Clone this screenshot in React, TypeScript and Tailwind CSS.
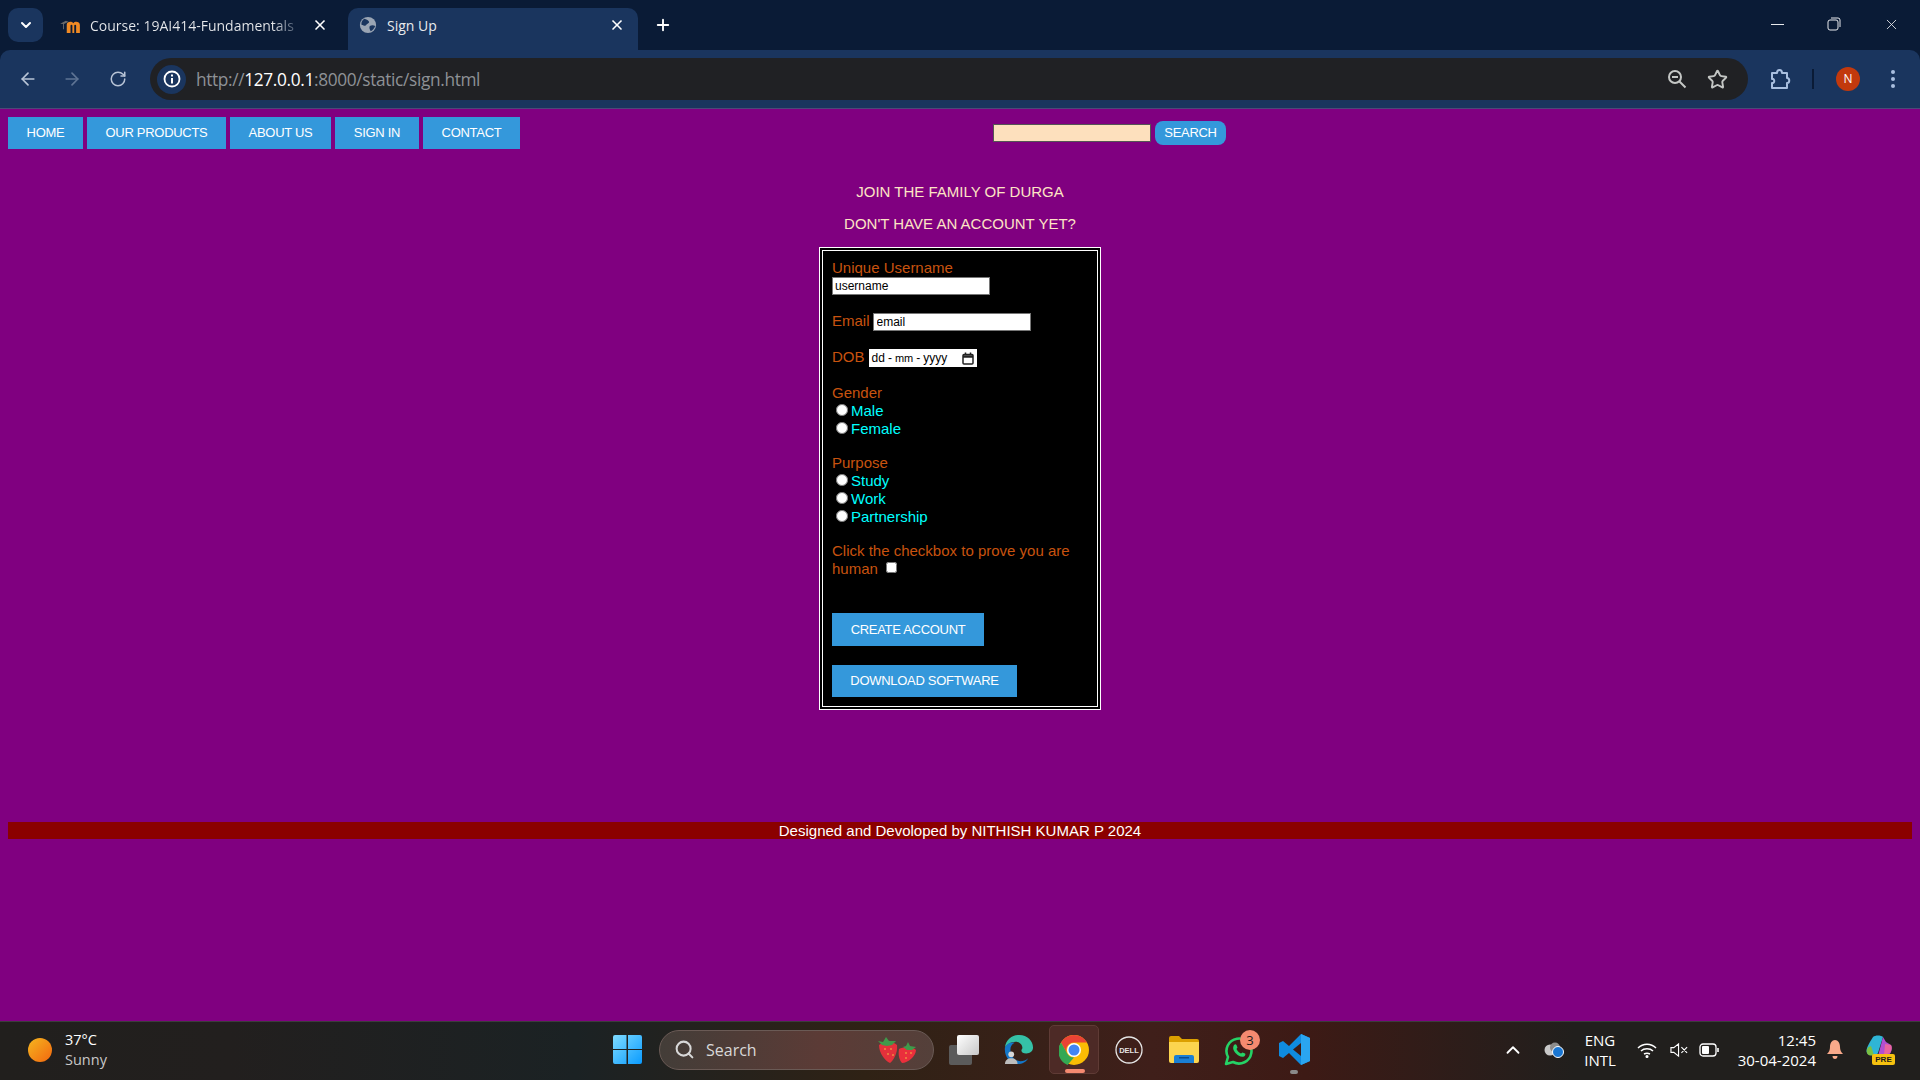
import { ArrowLeft, ArrowRight, ChevronDown, ChevronUp, Plus, RotateCw, Search, Star, X } from 'lucide-react'

const navItems = [
  { label: 'HOME', width: 'w-[75px]' },
  { label: 'OUR PRODUCTS', width: 'w-[139px]' },
  { label: 'ABOUT US', width: 'w-[101px]' },
  { label: 'SIGN IN', width: 'w-[84px]' },
  { label: 'CONTACT', width: 'w-[97px]' },
]

function Globe() {
  return (
    <svg viewBox="0 0 20 20" className="w-[18px] h-[18px] shrink-0">
      <circle cx="10" cy="10" r="9" fill="#9aa5b4" />
      <path d="M6 3c2 1 4 1 5 3s-2 2-3 4-3 0-5 0c-1-3 1-6 3-7zM12 11c2-1 4-1 6 0-1 3-3 5-5 6-1-2-2-4-1-6z" fill="#1a355e" />
    </svg>
  )
}

function MoodleIcon() {
  return (
    <svg viewBox="0 0 22 16" className="w-[21px] h-[15px] shrink-0">
      <path d="M7 16V7c0-3 5-4 7-1.500C16 3 21 4 21 7.500V16h-4V8c0-1-2-1-2 0v8h-2V8c0-1-2-1-2 0v8z" fill="#f08a24" />
      <path d="M0 6l6-3 3 1-5 2.500V12H3V6.500z" fill="#6b6b6b" />
    </svg>
  )
}

function WindowControls() {
  return (
    <div className="ml-auto flex items-center text-[#e8eaed]">
      <div className="w-[13px] h-px bg-[#e8eaed]" />
      <svg viewBox="0 0 14 14" className="w-[14px] h-[14px] ml-[43px]" fill="none" stroke="#e8eaed" strokeWidth="1">
        <rect x="1" y="3" width="10" height="10" rx="2" />
        <path d="M4 1h7a2 2 0 0 1 2 2v7" />
      </svg>
      <X className="w-[17px] h-[17px] ml-[42px] -mr-px" strokeWidth={1.2} />
    </div>
  )
}

function TabStrip() {
  return (
    <div className="h-[50px] bg-[#0a1b36] flex items-end pl-2 pr-[21px] font-['Open_Sans',sans-serif] text-[14px] text-[#e8eaed]">
      <div className="w-[35px] h-[34px] mb-2 rounded-[10px] bg-[#1a355e] flex items-center justify-center">
        <ChevronDown className="w-4 h-4 text-white" strokeWidth={3} />
      </div>
      <div className="w-[305px] h-[42px] pb-2 flex items-center pl-[17px]">
        <MoodleIcon />
        <span className="ml-[9px] w-[207px] whitespace-nowrap overflow-hidden bg-[linear-gradient(90deg,#e8eaed_88%,#3a4a63_100%)] bg-clip-text text-transparent">Course: 19AI414-Fundamentals</span>
        <X className="w-4 h-4 ml-[15px] text-white" strokeWidth={2.5} />
      </div>
      <div className="relative w-[290px] h-[42px] pb-2 rounded-t-[10px] bg-[#1a355e] flex items-center pl-[11px]">
        <Globe />
        <span className="ml-[10px]">Sign Up</span>
        <X className="w-4 h-4 ml-auto mr-[13px] text-white" strokeWidth={2.5} />
      </div>
      <Plus className="w-[18px] h-[18px] ml-4 mb-[16px] text-white" strokeWidth={2.5} />
      <div className="flex-1 flex h-[48px] mb-[2px] items-center">
        <WindowControls />
      </div>
    </div>
  )
}

function Toolbar() {
  return (
    <div className="h-[59px] bg-[#1a355e] border-b border-[#4b4a78] rounded-tl-[10px] rounded-tr-[10px] flex items-center pl-[18px]">
      <ArrowLeft className="w-5 h-5 text-[#b8c4d6]" strokeWidth={2} />
      <ArrowRight className="w-5 h-5 ml-6 text-[#5f7494]" strokeWidth={2} />
      <RotateCw className="w-[18px] h-[18px] ml-[27px] text-[#b8c4d6]" strokeWidth={2} />
      <div className="ml-[23px] w-[1598px] h-[42px] rounded-full bg-[#202124] flex items-center pl-[7px]">
        <div className="w-[29px] h-[29px] rounded-full bg-[#1a355e] flex items-center justify-center">
          <svg viewBox="0 0 18 18" className="w-[18px] h-[18px]">
            <circle cx="9" cy="9" r="7.500" fill="none" stroke="#fff" strokeWidth="1.800" />
            <rect x="8" y="8" width="2" height="5.500" fill="#fff" />
            <rect x="8" y="4.500" width="2" height="2" fill="#fff" />
          </svg>
        </div>
        <span className="ml-[10px] mt-px text-[17.3px] font-['Open_Sans',sans-serif] tracking-[-0.35px] text-[#8e9196]">
          http://<span className="text-white">127.0.0.1</span>:8000/static/sign.html
        </span>
        <svg viewBox="0 0 20 20" className="ml-auto w-[20px] h-[20px]" fill="none" stroke="#c4c7c5" strokeWidth="2">
          <circle cx="8" cy="8" r="6" />
          <path d="M5 8h6M12.500 12.500l6 6" />
        </svg>
        <Star className="ml-[20px] mr-[20px] w-[21px] h-[21px] text-[#c4c7c5]" strokeWidth={2.2} />
      </div>
      <svg viewBox="0 0 22 22" className="ml-[22px] w-[22px] h-[22px]" fill="none" stroke="#a9bfdf" strokeWidth="2" strokeLinejoin="round">
        <path d="M2 5h5c0-4 5-4 5 0h5v5c3 0 3 5 0 5v5H2v-5c3 1 3-5 0-4z" />
      </svg>
      <div className="ml-[20px] w-[2px] h-[20px] bg-[#0a1b36]" />
      <div className="ml-[22px] w-[24px] h-[24px] rounded-full bg-[#c2390d] flex items-center justify-center text-white text-[12px] font-['Open_Sans',sans-serif]">N</div>
      <div className="ml-[31px] flex flex-col gap-[3px]">
        <div className="w-1 h-1 rounded-full bg-[#a9bfdf]" />
        <div className="w-1 h-1 rounded-full bg-[#a9bfdf]" />
        <div className="w-1 h-1 rounded-full bg-[#a9bfdf]" />
      </div>
    </div>
  )
}

function Radio({ name, label, group }: { name: string; label: string; group: string }) {
  return (
    <div className="h-[18px] flex items-center">
      <input type="radio" name={group} value={name} className="ml-1 mr-[3px] w-3 h-3 -mt-[2px]" />
      <span className="text-[#00ffff]">{label}</span>
    </div>
  )
}

function SignForm() {
  return (
    <div className="w-[282px] h-[463px] mx-auto mt-[14px] border-4 border-double border-white bg-black pl-[9px] pt-2 text-[15px] leading-[18px] text-[#c8530f]">
      <div>Unique Username</div>
      <input readOnly defaultValue="username" className="block w-[158px] h-[18px] border border-[#767676] bg-white text-black text-[12px] px-[2px]" />
      <div className="mt-[17px] flex items-start">
        <span>Email</span>
        <input readOnly defaultValue="email" className="ml-[3px] mt-px w-[158px] h-[18px] border border-[#767676] bg-white text-black text-[12px] px-[3px]" />
      </div>
      <div className="mt-[17px] flex items-start">
        <span>DOB</span>
        <div className="ml-1 mt-px w-[108px] h-[18px] bg-white text-black text-[12px] leading-[18px] pl-[3px] flex items-center">
          <span>dd</span>
          <span className="mx-[3px]">-</span>
          <span className="text-[11px]">mm</span>
          <span className="mx-[3px]">-</span>
          <span>yyyy</span>
          <svg viewBox="0 0 12 13" className="ml-auto mr-[3px] w-[12px] h-[13px]" fill="none" stroke="#222" strokeWidth="1.500">
            <rect x="1" y="2.500" width="10" height="9.500" rx="1" />
            <path d="M1 4.500h10" strokeWidth="2.500" />
            <path d="M3.500 0.500v2M8.500 0.500v2" />
          </svg>
        </div>
      </div>
      <div className="mt-[17px]">Gender</div>
      <Radio group="gender" name="male" label="Male" />
      <Radio group="gender" name="female" label="Female" />
      <div className="mt-4">Purpose</div>
      <Radio group="purpose" name="study" label="Study" />
      <Radio group="purpose" name="work" label="Work" />
      <Radio group="purpose" name="partnership" label="Partnership" />
      <div className="mt-4">
        Click the checkbox to prove you are<br />
        human <input type="checkbox" className="ml-[4px] w-[11px] h-[11px] align-[1px]" />
      </div>
      <button className="block mt-[35px] w-[152px] h-[33px] bg-[#3498db] text-white text-[13px] tracking-[-0.3px]">CREATE ACCOUNT</button>
      <button className="block mt-[19px] w-[185px] h-[32px] bg-[#3498db] text-white text-[13px] tracking-[-0.3px]">DOWNLOAD SOFTWARE</button>
    </div>
  )
}

function WindowsLogo() {
  return (
    <svg viewBox="0 0 29 29" className="w-[29px] h-[29px]">
      <defs>
        <linearGradient id="win" x1="0" y1="0" x2="1" y2="1">
          <stop offset="0" stopColor="#7fdcff" />
          <stop offset="1" stopColor="#0a9bff" />
        </linearGradient>
      </defs>
      <path d="M0 2a2 2 0 0 1 2-2h11.500v14H0zM15 0h12a2 2 0 0 1 2 2v12H15zM0 15h13.500v14H2a2 2 0 0 1-2-2zM15 15h14v12a2 2 0 0 1-2 2H15z" fill="url(#win)" />
    </svg>
  )
}

function Strawberries() {
  return (
    <svg viewBox="0 0 42 30" className="w-[42px] h-[30px]">
      <path d="M3 10c5-4 14-4 18 0 1 8-4 16-7 18C9 26 3 18 3 10z" fill="#e4313b" />
      <path d="M2 6l5 1 3-5 3 4 7 0-4 4-5 1-5-1z" fill="#3f9a4a" />
      <path d="M23 14c4-2 14-2 17 1 0 6-8 13-14 13-3-3-4-9-3-14z" fill="#ea2f3c" />
      <path d="M27 12l3-1 2-4 2 4 6 1-4 3-5 0z" fill="#3f9a4a" />
      <g fill="#f6c945">
        <circle cx="9" cy="14" r=".8" /><circle cx="15" cy="14" r=".8" /><circle cx="12" cy="19" r=".8" /><circle cx="17" cy="20" r=".8" /><circle cx="30" cy="18" r=".8" /><circle cx="35" cy="18" r=".8" /><circle cx="30" cy="23" r=".8" />
      </g>
    </svg>
  )
}

function TaskView() {
  return (
    <div className="relative w-[30px] h-[30px]">
      <div className="absolute left-0 bottom-0 w-[23px] h-[20px] rounded-[2px] bg-[#5b5b5b]" />
      <div className="absolute right-0 top-0 w-[22px] h-[20px] rounded-[2px] bg-[linear-gradient(135deg,#ffffff,#c8c8c8)]" />
    </div>
  )
}

function EdgeIcon() {
  return (
    <svg viewBox="0 0 32 32" className="w-[31px] h-[31px]">
      <path d="M2 14C3 5 10 1 17 1c8 0 14 6 14 13 0 4-3 6-7 6-3 0-5-1-5-3 0-1 1-1 1-3 0-3-3-6-7-6-5 0-9 3-11 6z" fill="#35c1a7" />
      <path d="M2 14c2-4 6-6 10-5-4 2-5 6-4 10 1 5 5 9 10 9 3 0 6-1 8-3-2 4-6 6-11 6C7 31 1 23 2 14z" fill="#1477c9" />
      <circle cx="8.500" cy="21" r="3" fill="#d8d8d8" />
      <path d="M2 31c0-4 3-6 6.500-6s6.500 2 6.500 6z" fill="#bdbdbd" />
    </svg>
  )
}

function ChromeIcon() {
  return (
    <svg viewBox="0 0 30 30" className="w-[30px] h-[30px]">
      <circle cx="15" cy="15" r="15" fill="#fbbc04" />
      <path d="M15 0a15 15 0 0 1 13 7.500H15A7.500 7.500 0 0 0 8.500 19L2 7.500A15 15 0 0 1 15 0z" fill="#ea4335" />
      <path d="M2 7.500l6.500 11.500A7.500 7.500 0 0 0 15 22.500L8.500 30A15 15 0 0 1 2 7.500z" fill="#34a853" />
      <circle cx="15" cy="15" r="7" fill="#fff" />
      <circle cx="15" cy="15" r="5.500" fill="#4285f4" />
    </svg>
  )
}

function DellIcon() {
  return (
    <svg viewBox="0 0 28 28" className="w-[28px] h-[28px]">
      <circle cx="14" cy="14" r="13" fill="none" stroke="#e5e5e5" strokeWidth="1.300" />
      <text x="14" y="16.500" textAnchor="middle" fontFamily="'Liberation Sans', sans-serif" fontSize="7.500" fontWeight="700" fill="#e5e5e5">DELL</text>
    </svg>
  )
}

function FolderIcon() {
  return (
    <svg viewBox="0 0 30 27" className="w-[30px] h-[27px]">
      <path d="M0 2a2 2 0 0 1 2-2h8l3 3h15a2 2 0 0 1 2 2v3H0z" fill="#dca000" />
      <path d="M0 6h30v19a2 2 0 0 1-2 2H2a2 2 0 0 1-2-2z" fill="#fcd54f" />
      <path d="M5 21a2 2 0 0 1 2-2h16a2 2 0 0 1 2 2v6H5z" fill="#1a7fd4" />
      <rect x="10" y="21" width="10" height="1.500" fill="#0b4d8f" />
    </svg>
  )
}

function WhatsappIcon() {
  return (
    <div className="relative w-[36px] h-[36px]">
      <svg viewBox="0 0 30 30" className="absolute left-0 bottom-0 w-[30px] h-[30px]">
        <path d="M2 28l2-7a12.500 12.500 0 1 1 5 5z" fill="none" stroke="#25d366" strokeWidth="2.600" strokeLinejoin="round" />
        <path d="M10 9c1-1 2-1 2.500 0l1 2.500-1 1.500c1 2 2.500 3.500 4.500 4.500l1.500-1 2.500 1c1 .5 0 2.500-1 3-3 1-6-1-8-3s-4-5-2-8.500z" fill="#25d366" />
      </svg>
      <div className="absolute right-0 top-0 w-5 h-5 rounded-full bg-[#f58a70] text-[#1a1a1a] text-[13px] leading-5 text-center">3</div>
    </div>
  )
}

function VsCodeIcon() {
  return (
    <svg viewBox="0 0 31 31" className="w-[31px] h-[31px]">
      <path d="M22 0l9 4v23l-9 4-12-12-6 5-4-2v-13l4-2 6 5zM22 9l-8 6.500 8 6.500z" fill="#0f8be0" />
      <path d="M22 0l9 4v23l-9 4z" fill="#2aa5f0" />
    </svg>
  )
}

function CopilotIcon() {
  return (
    <div className="relative w-[30px] h-[30px]">
      <svg viewBox="0 0 28 24" className="w-[28px] h-[24px]">
        <path d="M8 2c2-2 8-2 10 0l-5 16c-1 3-9 3-11 0-2-4 3-11 6-16z" fill="#2fb5d6" />
        <path d="M2 18c-1-4 1-6 4-7l3 9c-2 1-6 1-7-2z" fill="#7ac143" />
        <path d="M18 2l3 5 5 3c2 3 0 9-3 11H13l5-19z" fill="#b24fd0" />
        <path d="M20 9l6 1c1 2 1 5-1 8l-6 2z" fill="#e9659e" />
      </svg>
      <div className="absolute right-0 bottom-0 w-[23px] h-[11px] rounded-[2px] bg-[#f6c10f] text-[8px] leading-[11px] font-bold text-[#1a1a1a] text-center font-['Liberation_Sans',sans-serif]">PRE</div>
    </div>
  )
}

function Taskbar() {
  return (
    <div className="h-[59px] shrink-0 pb-[3px] border-t border-[#3c3c3c] flex items-center text-white font-['Open_Sans',sans-serif] bg-[linear-gradient(90deg,#211f1d_0%,#221f1e_12%,#1b2224_30%,#2f2215_45%,#3f1f1a_60%,#3d1a15_68%,#211f1d_82%,#211f1d_100%)]">
      <div className="w-[613px] pl-[28px] flex items-center">
        <div className="w-6 h-6 rounded-full bg-[linear-gradient(135deg,#f5b61f,#f2670f)]" />
        <div className="ml-[13px] text-[14.500px] leading-[20px]">
          <div>37°C</div>
          <div className="text-[#c8c8c8]">Sunny</div>
        </div>
      </div>
      <WindowsLogo />
      <div className="ml-[17px] w-[275px] h-[40px] rounded-full border border-[#6a5a55] bg-[linear-gradient(90deg,#433d38,#5c3b36_60%,#54403a)] flex items-center pl-[14px] pr-4 text-[#d8d8d8] text-[16px]">
        <Search className="w-[21px] h-[21px]" strokeWidth={2.300} />
        <span className="ml-[11px]">Search</span>
        <div className="ml-auto -mr-[1px]">
          <Strawberries />
        </div>
      </div>
      <div className="ml-[15px]"><TaskView /></div>
      <div className="ml-[24px]"><EdgeIcon /></div>
      <div className="relative ml-[15px] w-[50px] h-[49px] rounded-[5px] border border-[#5f3b35] bg-[#4d2a26] flex items-center justify-center">
        <ChromeIcon />
        <div className="absolute left-[15px] bottom-0 w-[20px] h-[4px] rounded-full bg-[#f58a70]" />
      </div>
      <div className="ml-[16px]"><DellIcon /></div>
      <div className="ml-[26px]"><FolderIcon /></div>
      <div className="ml-[25px] -mt-[4px]"><WhatsappIcon /></div>
      <div className="relative ml-[19px]">
        <VsCodeIcon />
        <div className="absolute left-[11px] -bottom-[9px] w-[8px] h-[4px] rounded-full bg-[#8a8a8a]" />
      </div>
      <ChevronUp className="ml-[192px] w-[22px] h-[22px] text-white" strokeWidth={2} />
      <svg viewBox="0 0 21 16" className="ml-[19px] w-[21px] h-[16px]">
        <circle cx="7" cy="8" r="5.500" fill="#c9c9c9" />
        <circle cx="12" cy="5.500" r="5" fill="#8c8c8c" />
        <circle cx="15" cy="10" r="5.500" fill="#1976d2" stroke="#fff" strokeWidth="1" />
      </svg>
      <div className="ml-[20px] w-[32px] text-[15px] leading-[20px] text-center">
        <div>ENG</div>
        <div>INTL</div>
      </div>
      <svg viewBox="0 0 20 16" className="ml-[21px] w-5 h-4" fill="none" stroke="#fff" strokeWidth="1.500">
        <path d="M1 6c5-5 13-5 18 0M4 9c3-3 9-3 12 0M7 12c2-1 4-1 6 0" />
        <circle cx="10" cy="14.500" r=".8" fill="#fff" />
      </svg>
      <svg viewBox="0 0 20 16" className="ml-[13px] w-[19px] h-4" fill="none" stroke="#fff" strokeWidth="1.200">
        <path d="M1 5.500h3l5-4v13l-5-4H1zM12 5l6 6M18 5l-6 6" />
      </svg>
      <svg viewBox="0 0 20 14" className="ml-[10px] w-[20px] h-[14px]" fill="none" stroke="#fff" strokeWidth="1.300">
        <rect x="1" y="1" width="16" height="12" rx="3" />
        <rect x="3" y="3" width="7" height="8" rx="1" fill="#fff" stroke="none" />
        <path d="M19 5v4" strokeWidth="1.600" />
      </svg>
      <div className="ml-[18px] w-[79px] text-[15px] leading-[20px] text-right whitespace-nowrap">
        <div>12:45</div>
        <div>30-04-2024</div>
      </div>
      <svg viewBox="0 0 16 20" className="ml-[11px] w-4 h-5">
        <path d="M8 0c3 0 5 3 5 7 0 3 1 5 3 7H0c2-2 3-4 3-7 0-4 2-7 5-7zM5.500 16h5c0 2-1 3-2.500 3s-2.500-1-2.500-3z" fill="#f9a98a" />
      </svg>
      <div className="ml-[22px]"><CopilotIcon /></div>
    </div>
  )
}

export default function App() {
  return (
    <div className="w-[1920px] h-[1080px] flex flex-col overflow-hidden bg-[#0a1b36]">
      <TabStrip />
      <Toolbar />
      <main className="flex-1 bg-[#800080] font-['Liberation_Sans',sans-serif] text-[15px]">
        <div className="flex items-center pl-2 pt-[8px]">
          <div className="flex gap-1">
            {navItems.map(n => (
              <button key={n.label} className={`${n.width} h-[32px] bg-[#3498db] text-white text-[13px] tracking-[-0.3px] whitespace-nowrap`}>{n.label}</button>
            ))}
          </div>
          <input readOnly className="ml-[473px] w-[158px] h-[18px] border border-[#555] bg-[#fde0bd]" />
          <button className="ml-1 w-[71px] h-[24px] rounded-[8px] bg-[#3498db] text-white text-[13px] tracking-[-0.3px]">SEARCH</button>
        </div>
        <p className="mt-[34px] text-center text-[#fde4c4] leading-[18px]">JOIN THE FAMILY OF DURGA</p>
        <p className="mt-[14px] text-center text-[#fde4c4] leading-[18px]">DON'T HAVE AN ACCOUNT YET?</p>
        <SignForm />
        <div className="mx-2 mt-[112px] h-[17px] bg-[#8b0000] text-center text-white leading-[17px]">Designed and Devoloped by NITHISH KUMAR P 2024</div>
      </main>
      <Taskbar />
    </div>
  )
}
